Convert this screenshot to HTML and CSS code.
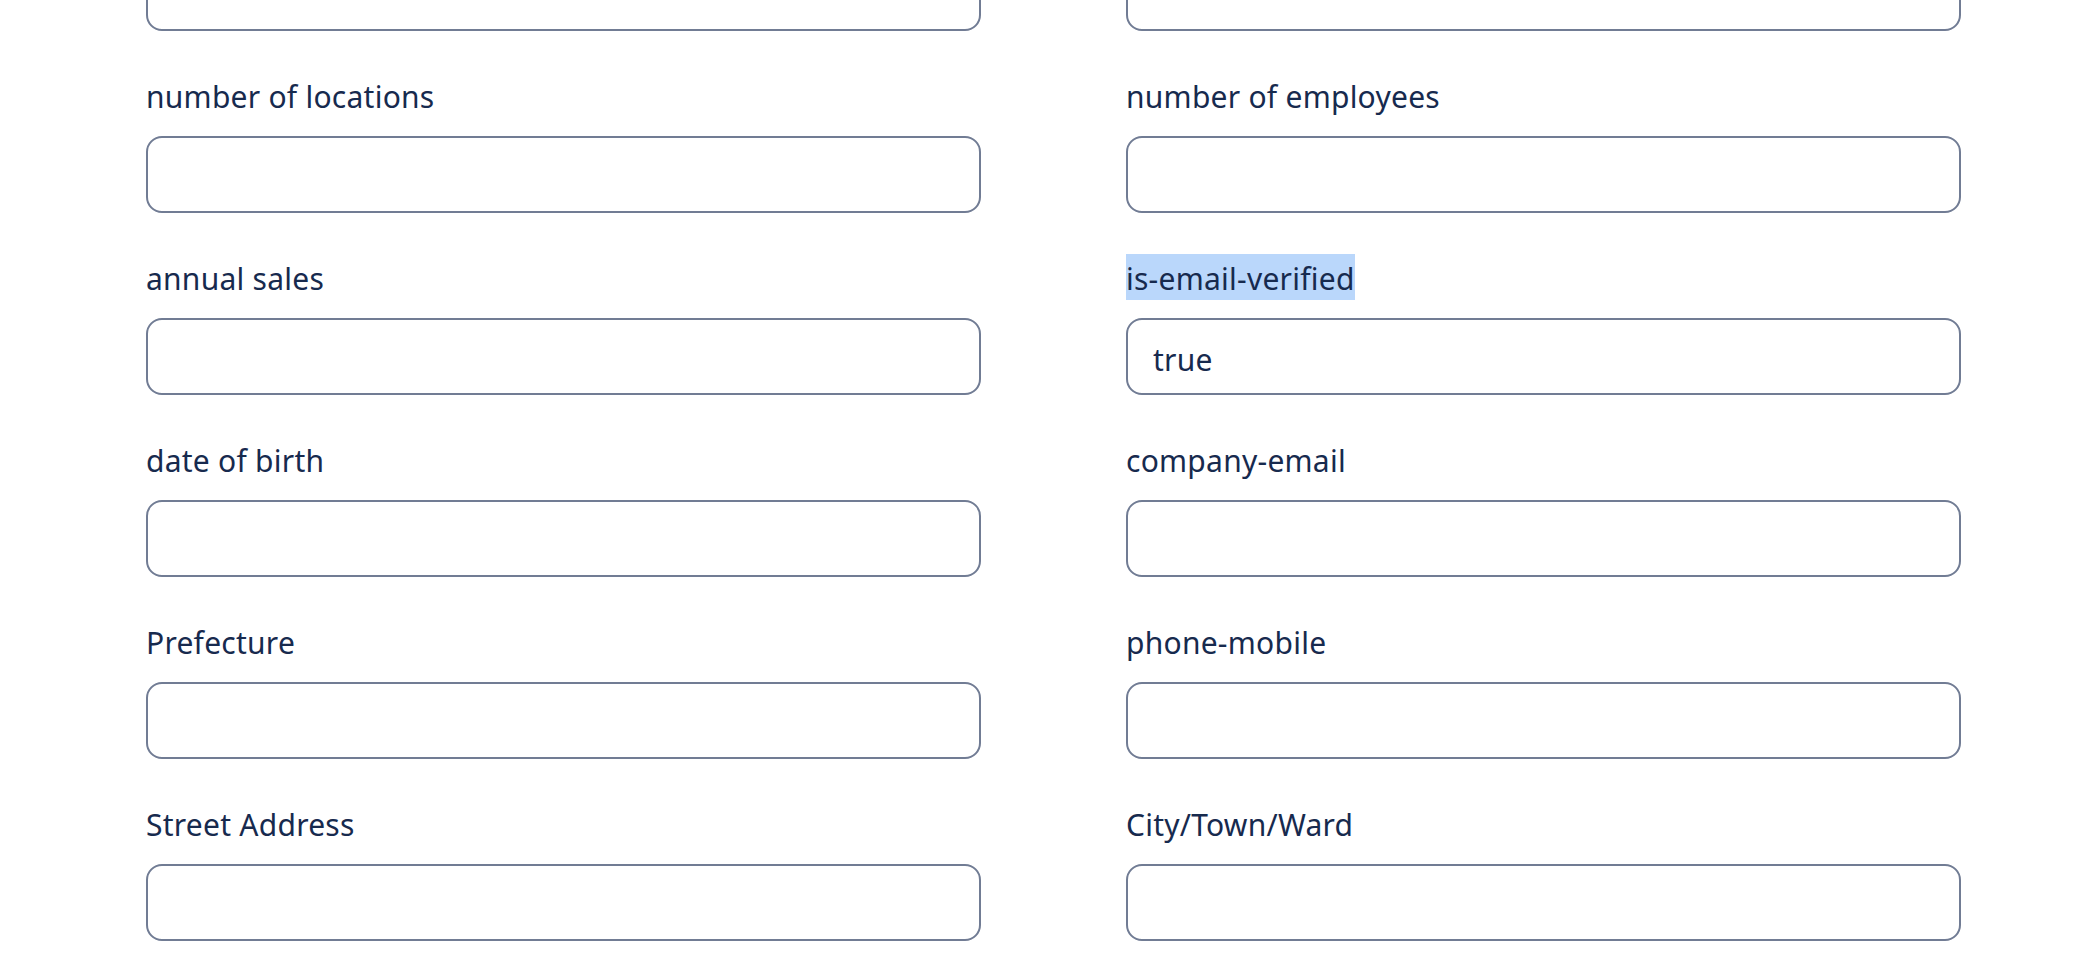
FILE: index.html
```html
<!DOCTYPE html>
<html lang="en">
<head>
<meta charset="utf-8">
<title>Form</title>
<link rel="stylesheet" href="styles.css">
</head>
<body>
<form class="form">
  <div class="field"><label class="label">&nbsp;</label><input class="input" type="text"></div>
  <div class="field"><label class="label">&nbsp;</label><input class="input" type="text"></div>

  <div class="field"><label class="label">number of locations</label><input class="input" type="text"></div>
  <div class="field"><label class="label">number of employees</label><input class="input" type="text"></div>

  <div class="field"><label class="label">annual sales</label><input class="input" type="text"></div>
  <div class="field"><label class="label"><span class="selected">is-email-verified</span></label><input class="input" type="text" value="true"></div>

  <div class="field"><label class="label">date of birth</label><input class="input" type="text"></div>
  <div class="field"><label class="label">company-email</label><input class="input" type="text"></div>

  <div class="field"><label class="label">Prefecture</label><input class="input" type="text"></div>
  <div class="field"><label class="label">phone-mobile</label><input class="input" type="text"></div>

  <div class="field"><label class="label">Street Address</label><input class="input" type="text"></div>
  <div class="field"><label class="label">City/Town/Ward</label><input class="input" type="text"></div>
</form>
</body>
</html>
```

FILE: styles.css
```css
html, body {
  margin: 0;
  padding: 0;
  background: #ffffff;
  overflow: hidden;
}

body {
  font-family: "Noto Sans", "Noto Sans CJK JP", sans-serif;
  color: #172a4e;
}

.form {
  display: grid;
  grid-template-columns: 835px 835px;
  column-gap: 145px;
  row-gap: 41px;
  padding-left: 146px;
  margin-top: -110px;
}

.field {
  display: flex;
  flex-direction: column;
  gap: 18px;
}

.label {
  font-size: 30px;
  letter-spacing: 0.25px;
  line-height: 43px;
  height: 43px;
  padding-top: 3px;
  color: #172a4e;
  white-space: nowrap;
}

.selected {
  background: #bad7fb;
  padding: 4px 0 1px;
}

.input {
  box-sizing: border-box;
  height: 77px;
  width: 100%;
  margin: 0;
  border: 2px solid #717c94;
  border-radius: 16px;
  padding: 5px 25px 0;
  font-family: inherit;
  font-size: 30px;
  letter-spacing: 0.25px;
  color: #172a4e;
  background: #ffffff;
  outline: none;
}
```
